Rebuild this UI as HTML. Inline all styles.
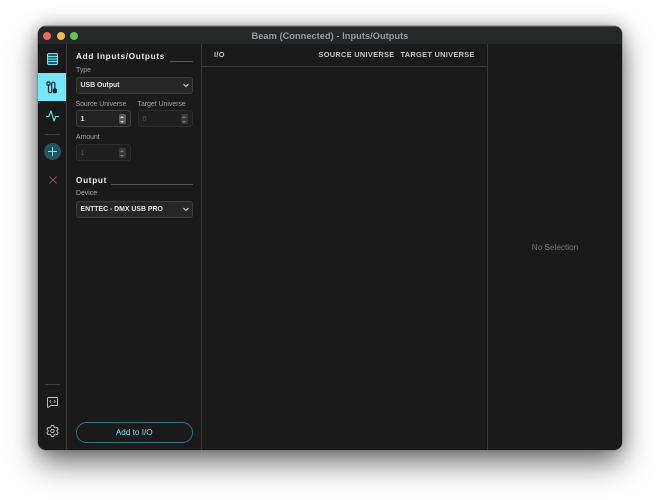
<!DOCTYPE html>
<html>
<head>
<meta charset="utf-8">
<style>
*{box-sizing:border-box}
html,body{margin:0;padding:0;width:660px;height:500px;background:#fff;overflow:hidden;font-family:"Liberation Sans",sans-serif}
.abs{position:absolute}
#win{position:absolute;left:38px;top:26px;width:584px;height:424px;background:#1a1a1a;border-radius:8px;box-shadow:0 0 0 .5px #777,0 14px 30px rgba(0,0,0,.5),0 0 18px rgba(0,0,0,.3);overflow:hidden}
#bar{position:absolute;left:0;top:0;width:584px;height:18px;background:#25272a;border-top:1px solid #555}
.dot{position:absolute;top:4.5px;width:8px;height:8px;border-radius:50%}
#title{position:absolute;left:0;top:3px;width:584px;text-align:center;font-size:9.2px;line-height:12px;color:#9a9b9d;font-weight:bold;letter-spacing:.07px}
.vl{position:absolute;top:18px;bottom:0;width:1px;background:#3a3a3a}
.lab{position:absolute;font-size:6.9px;line-height:9px;color:#a5a5a5}
.h{position:absolute;font-size:8.2px;line-height:10px;font-weight:bold;color:#eee;letter-spacing:.7px}
.hl{position:absolute;height:1px;background:#555}
.sel{position:absolute;height:17px;background:#262626;border:1px solid #3c3c3c;border-radius:3px;font-size:6.9px;line-height:16px;color:#e6e6e6;padding-left:4px;font-weight:bold}
.num{position:absolute;height:17px;width:55px;background:#222;border:1px solid #3e3e3e;border-radius:3px;font-size:7.2px;line-height:16px;color:#e6e6e6;padding-left:4px;font-weight:bold}
.num.dis{background:#1f1f1f;border-color:#2c2c2c;color:#555;font-weight:normal}
.sp{position:absolute;right:4px;top:3px;width:7px;height:10px;border-radius:2px;background:#5c5c5c}
.dis .sp{background:#3a3a3a}
.sp:before,.sp:after{content:"";position:absolute;left:1.5px;width:0;height:0;border-left:2px solid transparent;border-right:2px solid transparent}
.sp:before{top:1.5px;border-bottom:2.5px solid #ccc}
.sp:after{bottom:1.5px;border-top:2.5px solid #ccc}
.dis .sp:before{border-bottom-color:#777}
.dis .sp:after{border-top-color:#777}
.th{position:absolute;top:24px;font-size:7.4px;line-height:10px;font-weight:bold;color:#c4c4c4;letter-spacing:.3px;white-space:nowrap}
svg{position:absolute;overflow:visible}
</style>
</head>
<body>
<div id="win">
  <div id="bar">
    <div class="dot" style="left:5px;background:#ee6a5f"></div>
    <div class="dot" style="left:19px;background:#f5bd4f"></div>
    <div class="dot" style="left:32px;background:#61c454"></div>
    <div id="title">Beam (Connected) - Inputs/Outputs</div>
  </div>

  <div class="vl" style="left:28px"></div>
  <div class="vl" style="left:163px"></div>
  <div class="vl" style="left:449px"></div>

  <!-- sidebar -->
  <svg style="left:9px;top:27px" width="11" height="12" viewBox="0 0 11 12" fill="none" stroke="#6fe3f5" stroke-width="1">
    <rect x=".5" y=".5" width="10" height="11" rx="1.5" fill="#1f5e68"/>
    <path d="M.5 3.5h10M.5 6h10M.5 8.5h10"/>
  </svg>
  <div class="abs" style="left:0;top:47px;width:28px;height:28px;background:#76e6fb"></div>
  <svg style="left:8px;top:55px" width="13" height="13" viewBox="0 0 13 13" fill="none" stroke="#13272b" stroke-width="1.2" stroke-linecap="round">
    <path d="M2.5 4v6.2a1.600 1.600 0 0 0 3.200 0V2.800a1.600 1.600 0 0 1 3.200 0V8"/>
    <rect x="1" y="1" width="3" height="3.200" rx="1"/>
    <rect x="7.400" y="8" width="3" height="3.600" rx="1" fill="#13272b"/>
  </svg>
  <svg style="left:8px;top:84px" width="13" height="12" viewBox="0 0 13 12" fill="none" stroke="#6fe3f5" stroke-width="1.1" stroke-linejoin="round" stroke-linecap="round">
    <path d="M.5 6.500h2.300L5 1l3 10 1.800-4.500h2.700"/>
  </svg>
  <div class="abs" style="left:7px;top:108px;width:15px;height:1px;background:#3e3e3e"></div>
  <div class="abs" style="left:6px;top:117px;width:17px;height:17px;border-radius:50%;background:#23555d"></div>
  <svg style="left:10px;top:121px" width="9" height="9" viewBox="0 0 9 9" stroke="#79e6f8" stroke-width="1"><path d="M4.500 0v9M0 4.500h9"/></svg>
  <svg style="left:10.500px;top:150px" width="8" height="8" viewBox="0 0 8 8" stroke="#8a5448" stroke-width="1"><path d="M.5.5l7 7M7.500.5l-7 7"/></svg>
  <div class="abs" style="left:7px;top:358px;width:15px;height:1px;background:#3e3e3e"></div>
  <svg style="left:9px;top:371px" width="11" height="11" viewBox="0 0 11 11" fill="none" stroke="#c8c8c8" stroke-width=".9" stroke-linejoin="round">
    <path d="M1.500.5h8a1 1 0 0 1 1 1v6a1 1 0 0 1-1 1H3.500L1 10.500l-.5-.2V1.500a1 1 0 0 1 1-1z"/>
    <path d="M4 3l-1.300 1.500L4 6M7 3l1.300 1.500L7 6" stroke-width=".8"/>
  </svg>
  <svg style="left:9px;top:399px" width="11" height="12" viewBox="0 0 11 12" fill="none" stroke="#c8c8c8" stroke-width=".9" stroke-linejoin="round">
    <path d="M4.300.6h2.400l.4 1.600 1.300.7 1.600-.5 1.100 2-1.200 1.100v1l1.200 1.100-1.100 2-1.600-.5-1.300.7-.4 1.600H4.300l-.4-1.600-1.300-.7-1.600.5-1.100-2L1.100 6.500v-1L-.1 4.400l1.100-2 1.600.5 1.300-.7z"/>
    <circle cx="5.500" cy="6" r="1.700"/>
  </svg>

  <!-- form panel -->
  <div class="h" style="left:38px;top:26px">Add Inputs/Outputs</div>
  <div class="hl" style="left:132px;top:35px;width:23px"></div>
  <div class="lab" style="left:38px;top:40px">Type</div>
  <div class="sel" style="left:37.500px;top:51px;width:117.500px">USB Output
    <svg style="right:3px;top:5px" width="6" height="5" viewBox="0 0 6 5" fill="none" stroke="#ddd" stroke-width="1"><path d="M.5 1l2.500 2.500L5.500 1"/></svg>
  </div>
  <div class="lab" style="left:37.500px;top:74px">Source Universe</div>
  <div class="lab" style="left:99.500px;top:74px">Target Universe</div>
  <div class="num" style="left:37.500px;top:84px">1<div class="sp"></div></div>
  <div class="num dis" style="left:99.500px;top:84px">0<div class="sp"></div></div>
  <div class="lab" style="left:38px;top:107px">Amount</div>
  <div class="num dis" style="left:37.500px;top:118px">1<div class="sp"></div></div>
  <div class="h" style="left:38px;top:150px">Output</div>
  <div class="hl" style="left:73px;top:158px;width:82px"></div>
  <div class="lab" style="left:38px;top:163px">Device</div>
  <div class="sel" style="left:37.500px;top:175px;width:117.500px">ENTTEC - DMX USB PRO
    <svg style="right:3px;top:5px" width="6" height="5" viewBox="0 0 6 5" fill="none" stroke="#ddd" stroke-width="1"><path d="M.5 1l2.500 2.500L5.500 1"/></svg>
  </div>
  <div class="abs" style="left:37.500px;top:396px;width:117.500px;height:21px;border:1px solid #2d7480;border-radius:10.500px;text-align:center;font-size:8.200px;line-height:19px;color:#70e2f5">Add to I/O</div>

  <!-- table -->
  <div class="th" style="left:176px">I/O</div>
  <div class="th" style="left:280.500px">SOURCE UNIVERSE</div>
  <div class="th" style="left:362.500px">TARGET UNIVERSE</div>
  <div class="abs" style="left:164px;top:40px;width:285px;height:1px;background:#3a3a3a"></div>

  <div class="abs" style="left:450px;top:216px;width:134px;text-align:center;font-size:8.200px;line-height:11px;color:#767676">No Selection</div>
</div>
</body>
</html>
